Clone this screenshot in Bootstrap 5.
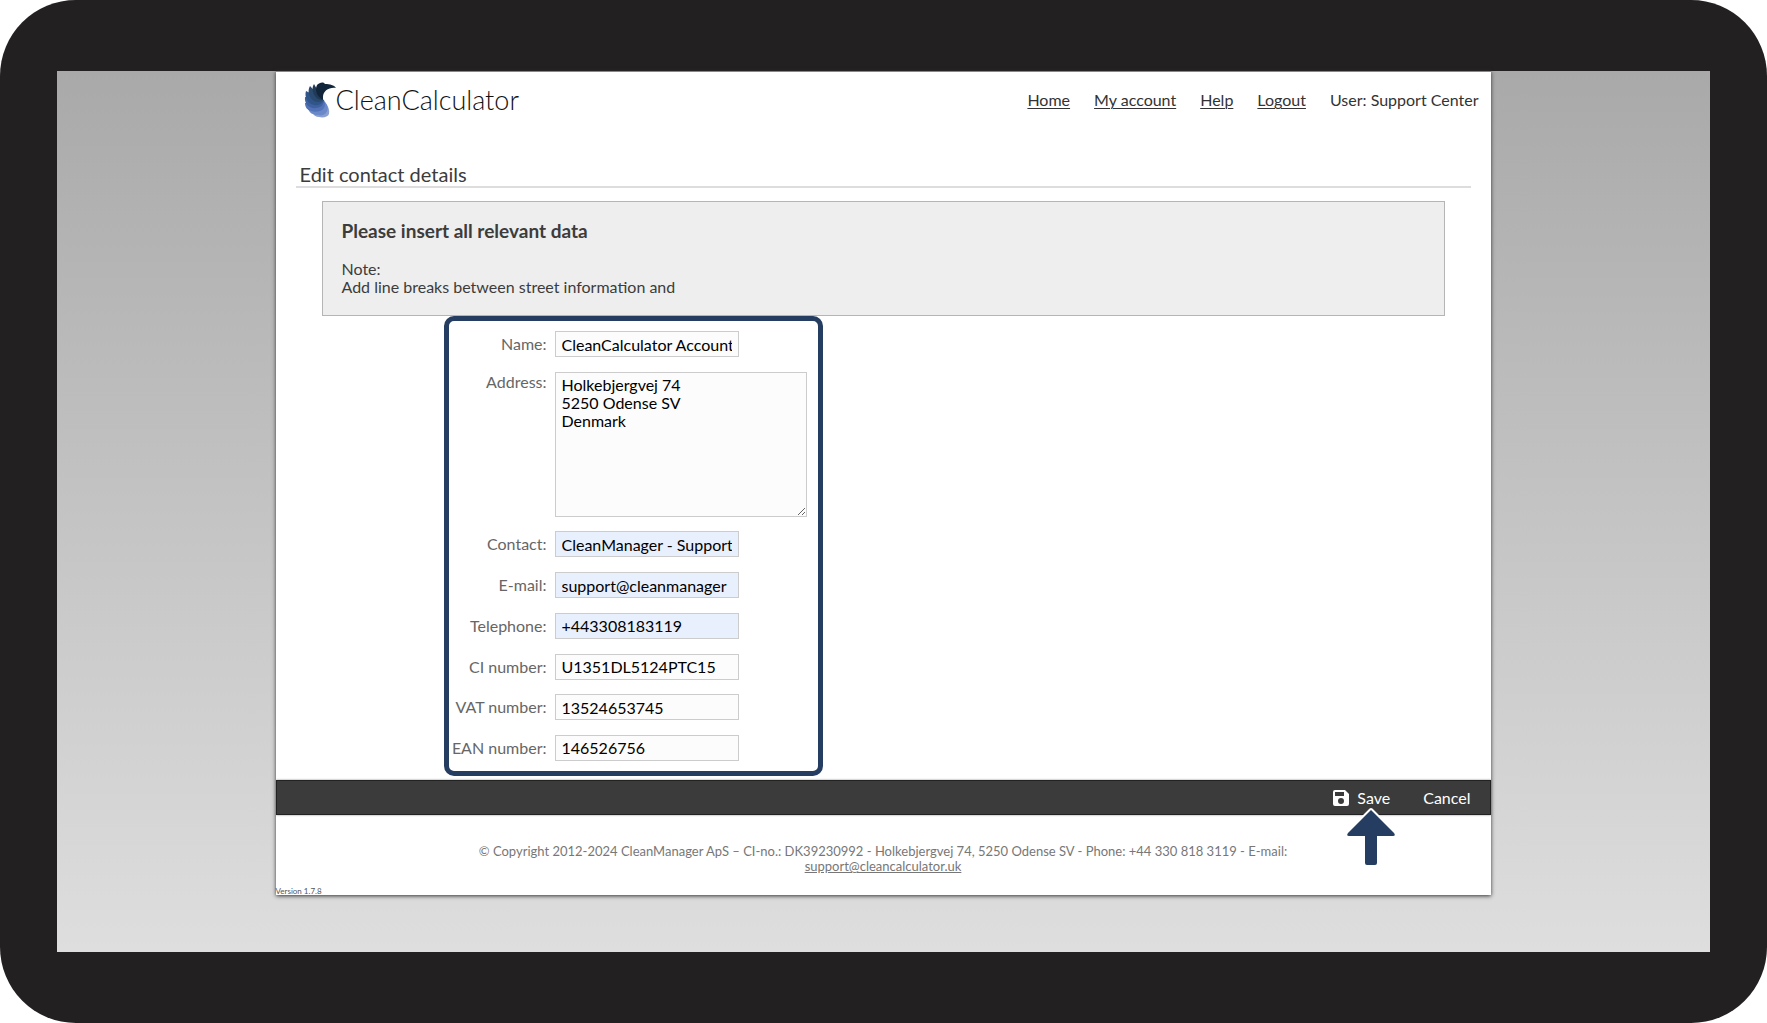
<!DOCTYPE html>
<html lang="en">
<head>
<meta charset="utf-8">
<meta name="viewport" content="width=device-width, initial-scale=1">
<title>CleanCalculator – Edit contact details</title>
<link href="https://cdn.jsdelivr.net/npm/bootstrap@5.3.0/dist/css/bootstrap.min.css" rel="stylesheet">
<style>
body{font-family:Lato,"Open Sans",sans-serif;font-size:16px;line-height:18px;color:#3c3c3c;background:#fff}
.bezel{min-height:100vh;padding:71px 57px;background:#232021;border-radius:76px}
.screen{background:linear-gradient(#a9a9a9,#dedede)}
.sheet{width:100%;max-width:1215px;margin-right:1px;margin-bottom:56px;background:#fff;border-top:1px solid #888;box-shadow:0 1px 4px #333}
.topbar{padding:10px 12px 0 28px}
.brand{font-size:27px;font-weight:300;line-height:36px;color:#111;text-decoration:none}
.brand svg{width:32px;height:36px}
.topbar nav{gap:24px;color:#333}
.topbar nav a{color:#333;text-underline-offset:2px;text-decoration-thickness:1px}
.page-title{margin:45px 20px 13px;padding:0 4px 1px;font-size:20px;line-height:22px;border-bottom:2px solid #ddd;font-weight:400}
.notice{margin:0 46px;padding:19px;background:#eee;border:1px solid #b5b5b5}
.notice h2{font-size:19px;line-height:20px;font-weight:700;margin-bottom:19px}
.details{width:379px;min-height:460px;margin-left:168px;padding:10px 11px;border:5px solid #243d60;border-radius:10px}
.details label{width:87px;margin-right:8px;white-space:nowrap;color:#666;line-height:26px;display:flex;justify-content:flex-end}
.details .form-control{font-size:16px;line-height:18px;padding:3px 6px;border:1px solid #ccc;border-radius:0;background:#fcfcfc;color:#000}
.details input.form-control{width:184px;height:26px}
.details textarea.form-control{width:252px;height:145px;resize:both}
.details input.autofilled{background:#e8effd}
.details .tall label{line-height:20px}
.actions{height:35px;margin-top:4px;padding:0 19px;gap:33px;background:#3b3b3b;border:1px solid #222;box-shadow:0 0 2px #888}
.actions button{padding:0;border:0;background:none;color:#fff;font-size:16px;line-height:18px}
.pointer-arrow{position:absolute;left:12px;top:17px;width:52px;height:62px;pointer-events:none}
.legal{max-width:840px;margin:29px auto 0;font-size:13px;line-height:15px;color:#777}
.legal a{color:#777}
.version{font-size:8px;line-height:8px;margin-top:13px;color:#555}
</style>
<script src="https://cdn.jsdelivr.net/npm/bootstrap@5.3.0/dist/js/bootstrap.bundle.min.js"></script>
</head>
<body>
<div class="bezel d-flex">
<div class="screen flex-fill d-flex justify-content-center align-items-start">
<div class="sheet">
<header class="topbar d-flex justify-content-between align-items-center">
<a class="brand d-flex align-items-center" href="#">
<svg viewBox="0 0 32 36" aria-hidden="true">
<path fill="#8aa0d2" d="M8 30l13-10c3 4 5 8 4 12-1 3-6 4-10 3-3 0-6-2-7-5z"/>
<path fill="#6b89c8" d="M4 26l16-7c4 4 5 8 2 12-2 2-5 3-8 2-5 0-9-2-10-7z"/>
<path fill="#5273b8" d="M1 21l19-3c2 5 1 9-4 11-3 1-6 1-9 0-4-1-6-4-6-8z"/>
<path fill="#40619f" d="M1 15l19 3c0 5-4 8-8 8-6 1-12-4-11-11z"/>
<path fill="#30558a" d="M2 9l18 9c-2 4-6 6-10 5C4 22 0 15 2 9z"/>
<path fill="#2a4a70" d="M6 4l13 14c-2 2-6 3-9 1C5 16 3 9 6 4z"/>
<path fill="#203a58" d="M10 2l9 16c-3 0-6-1-8-4-3-4-3-9-1-12z"/>
<path fill="#11263b" d="M13 3c2-2 5-3 7-2l1 1c5 0 9 1 11 4-7-1-13 3-13 9v3c-5-3-9-9-6-15z"/>
</svg><span>CleanCalculator</span></a>
<nav class="d-flex flex-wrap" aria-label="Main"><a href="#">Home</a><a href="#">My account</a><a href="#">Help</a><a href="#">Logout</a><span>User: Support Center</span></nav>
</header>
<main>
<h1 class="page-title">Edit contact details</h1>
<section class="notice"><h2>Please insert all relevant data</h2><p class="mb-0">Note:<br>Add line breaks between street information and</p></section>
<form id="contact-form" class="details d-flex flex-column justify-content-between">
<div class="d-flex"><label for="name">Name:</label><input class="form-control" id="name" value="CleanCalculator Account"></div>
<div class="d-flex tall"><label for="address">Address:</label><textarea class="form-control" id="address">Holkebjergvej 74
5250 Odense SV
Denmark</textarea></div>
<div class="d-flex"><label for="contact">Contact:</label><input class="form-control autofilled" id="contact" value="CleanManager - Support"></div>
<div class="d-flex"><label for="email">E-mail:</label><input class="form-control autofilled" id="email" value="support@cleanmanager"></div>
<div class="d-flex"><label for="phone">Telephone:</label><input class="form-control autofilled" id="phone" type="tel" value="+443308183119"></div>
<div class="d-flex"><label for="ci">CI number:</label><input class="form-control" id="ci" value="U1351DL5124PTC15"></div>
<div class="d-flex"><label for="vat">VAT number:</label><input class="form-control" id="vat" value="13524653745"></div>
<div class="d-flex"><label for="ean">EAN number:</label><input class="form-control" id="ean" value="146526756"></div>
</form>
</main>
<div class="actions d-flex justify-content-end align-items-center">
<div class="position-relative d-flex">
<button type="submit" form="contact-form" class="d-flex align-items-center gap-2"><svg width="16" height="16" viewBox="0 0 16 16" aria-hidden="true"><path fill="#fff" fill-rule="evenodd" d="M2 0h10l4 4v10a2 2 0 0 1-2 2H2a2 2 0 0 1-2-2V2a2 2 0 0 1 2-2zM2 2v4h9V2zM8 8a3 3 0 1 0 0 6 3 3 0 0 0 0-6z"/></svg>Save</button>
<svg class="pointer-arrow" viewBox="0 0 52 62" aria-hidden="true"><path d="M26 4L49 27Q51 30 48 30H32V57Q32 59 30 59H22Q20 59 20 57V30H4Q1 30 3 27Z" fill="#243d60" stroke="#fff" stroke-width="4" stroke-linejoin="round" paint-order="stroke"/></svg>
</div>
<button type="button">Cancel</button>
</div>
<footer><p class="legal text-center">© Copyright 2012-2024 CleanManager ApS – CI-no.: DK39230992 - Holkebjergvej 74, 5250 Odense SV - Phone: +44 330 818 3119 - <span class="text-nowrap">E-mail:</span><br><a href="#">support@cleancalculator.uk</a></p><div class="version">Version 1.7.8</div></footer>
</div>
</div>
</div>
</body>
</html>
